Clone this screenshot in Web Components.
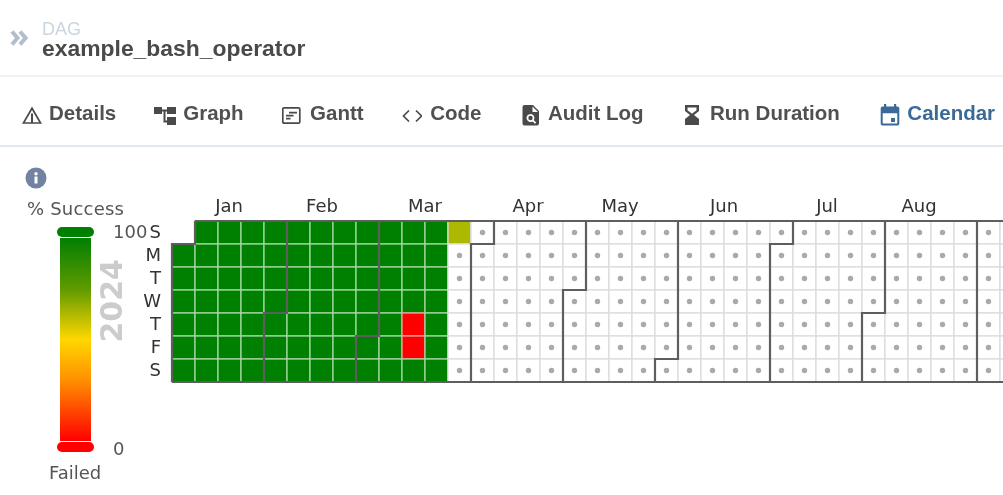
<!DOCTYPE html>
<html lang="en">
<head>
<meta charset="utf-8">
<title>example_bash_operator</title>
<style>
html,body{margin:0;padding:0;background:#fff;overflow:hidden;width:1003px;height:495px}
body{font-family:"Liberation Sans",Arial,sans-serif;color:#4a4a4a;filter:blur(.45px)}
</style>
</head>
<body>
<dag-header label="DAG" name="example_bash_operator"></dag-header>
<dag-tabs>
  <dag-tab icon="warn" gap="7" after="-4.5">Details</dag-tab>
  <dag-tab icon="graph" gap="7.5" after="-5">Graph</dag-tab>
  <dag-tab icon="gantt" gap="9.5" after="-4">Gantt</dag-tab>
  <dag-tab icon="code" gap="8.5" after="-1">Code</dag-tab>
  <dag-tab icon="audit" gap="7.5" after="-2">Audit Log</dag-tab>
  <dag-tab icon="hour" gap="10.5" after="-2">Run Duration</dag-tab>
  <dag-tab icon="cal" gap="7.5" after="-2" active>Calendar</dag-tab>
</dag-tabs>
<cal-view>
  <cal-legend slot="legend"></cal-legend>
  <cal-heatmap slot="map"></cal-heatmap>
</cal-view>
<script>
const ICONS={
warn:'<svg width="20" height="20" viewBox="0 0 20 20"><path d="M10 3.200 18.600 18H1.400Z" fill="none" stroke="#4a4a4a" stroke-width="1.700"/><path d="M10 8.500V18" stroke="#4a4a4a" stroke-width="2"/></svg>',
graph:'<svg width="22" height="20" viewBox="0 0 22 20"><g fill="#4a4a4a"><rect x="0" y="2" width="8" height="7"/><rect x="13" y="2" width="9" height="7"/><rect x="13" y="12" width="9" height="8"/><path d="M8 4.500h5V6.500h-1.500v9H13v2H9.500v-11H8Z"/></g></svg>',
gantt:'<svg width="20" height="20" viewBox="0 0 20 20"><g fill="none" stroke="#4a4a4a" stroke-width="1.700"><rect x="1.800" y="2.800" width="17" height="15.400" rx="1.200"/><path d="M8 7.700h8M5 10.700h7.500M5 13.700h4.500"/></g></svg>',
code:'<svg width="20" height="20" viewBox="0 0 20 20"><path d="M7 5.500 1.500 11 7 16.500M14 5.500 19.500 11 14 16.500" fill="none" stroke="#4a4a4a" stroke-width="1.700"/></svg>',
audit:'<svg width="18" height="22" viewBox="0 0 18 22"><path fill-rule="evenodd" fill="#4a4a4a" d="M2.500 1H11l6 6v12.500a2 2 0 0 1-2 2H2.500a2 2 0 0 1-2-2V3a2 2 0 0 1 2-2ZM10.500 2.500V8H16ZM8.500 10a4 4 0 1 0 2.100 7.400l2.400 2.400 1.200-1.200-2.400-2.400A4 4 0 0 0 8.500 10Zm0 1.800a2.200 2.200 0 1 1 0 4.400 2.200 2.200 0 0 1 0-4.400Z"/></svg>',
hour:'<svg width="16" height="22" viewBox="0 0 16 22"><path fill-rule="evenodd" fill="#4a4a4a" d="M1 1h14v6l-5 4 5 4v6H1v-6l5-4-5-4ZM3.500 3.500v2.700L8 9.800l4.500-3.600V3.500Z"/></svg>',
cal:'<svg width="20" height="22" viewBox="0 0 20 22"><g fill="#3a6a98"><rect x="4" y="0" width="2.200" height="5"/><rect x="14" y="0" width="2.200" height="5"/><path fill-rule="evenodd" d="M2.500 2.500h15a1.800 1.800 0 0 1 1.800 1.800v15.500a1.800 1.800 0 0 1-1.800 1.800h-15A1.800 1.800 0 0 1 .7 19.800V4.300A1.800 1.800 0 0 1 2.500 2.500Zm.200 6.700v10.400h14.600V9.200Z"/><rect x="11" y="14" width="4" height="4"/></g></svg>'
};
class DagHeader extends HTMLElement{
  constructor(){super();
    const s=this.attachShadow({mode:'open'});
    s.innerHTML=`<style>
    :host{display:flex;box-sizing:border-box;height:77px;border-bottom:2px solid #eef2f6;padding:20px 0 0 10px;gap:14px;align-items:flex-start}
    svg{margin-top:10px;flex:none}
    .l{font-size:18px;line-height:19px;color:#cbd5e0}
    .n{font-size:22.9px;line-height:23px;font-weight:700;color:#4a4a4a;margin-top:-2px}
    </style>
    <svg width="18" height="16" viewBox="0 0 18 16"><path d="M2 1.500 7.500 8 2 14.500M10 1.500 15.500 8 10 14.500" fill="none" stroke="#b2becc" stroke-width="4"/></svg>
    <div><div class="l">${this.getAttribute('label')}</div><div class="n">${this.getAttribute('name')}</div></div>`;
  }
}
class DagTabs extends HTMLElement{
  constructor(){super();
    this.attachShadow({mode:'open'}).innerHTML=`<style>
    :host{display:flex;box-sizing:border-box;height:70px;border-bottom:2px solid #e2e8f0;padding-left:1px;overflow:hidden}
    </style><slot></slot>`;
  }
}
class DagTab extends HTMLElement{
  constructor(){super();
    const active=this.hasAttribute('active');
    this.attachShadow({mode:'open'}).innerHTML=`<style>
    :host{display:flex;flex:none;box-sizing:border-box;height:70px;margin-right:${this.getAttribute('after')}px;padding:3px 21px 0;gap:${this.getAttribute('gap')}px;align-items:center;
      font-size:20.500px;font-weight:700;color:${active?'#3a6a98':'#505050'};border-bottom:2px solid ${active?'#3a6a98':'transparent'}}
    svg{display:block;margin-top:5px}
    </style>${ICONS[this.getAttribute('icon')]}<slot></slot>`;
  }
}
class CalView extends HTMLElement{
  constructor(){super();
    this.attachShadow({mode:'open'}).innerHTML=`<style>
    :host{display:flex;align-items:flex-start}
    </style><slot name="legend"></slot><slot name="map"></slot>`;
  }
}
class CalLegend extends HTMLElement{
  constructor(){super();
    this.attachShadow({mode:'open'}).innerHTML=`<style>
    :host{display:block;flex:none;width:140px;height:347px;box-sizing:border-box;padding:20px 0 0 25px;font-family:"DejaVu Sans",sans-serif;font-size:18px;color:#555}
    svg{display:block}
    .t{margin-top:10px;line-height:20px;white-space:nowrap;margin-left:2px;letter-spacing:.2px}
    .row{display:flex;margin-top:8px;margin-left:32px;height:225px;position:relative}
    .bar{width:37px;display:flex;flex-direction:column;align-items:center;gap:1px}
    .pill{height:10px;width:37px;border-radius:5px;flex:none}
    .grad{flex:1;width:31px;background:linear-gradient(#008000 0%,#5f9a00 25%,#ffd700 50%,#ff9000 70%,#ff0000 100%)}
    .ticks{display:flex;flex-direction:column;justify-content:space-between;margin-left:19px;line-height:20px;height:237px;margin-top:-5px;flex:none;width:36px}
    .y{position:absolute;left:41px;top:32px;writing-mode:vertical-rl;transform:rotate(180deg);font:700 30px/28px "DejaVu Sans",sans-serif;color:#ccc}
    .f{margin:11px 0 0 24px;line-height:20px}
    </style>
    <svg width="22" height="22" viewBox="0 0 22 22"><circle cx="11" cy="11" r="10.500" fill="#7183a0"/><rect x="9.500" y="9.500" width="3" height="7" fill="#fff"/><circle cx="11" cy="6.800" r="1.700" fill="#fff"/></svg>
    <div class="t">% Success</div>
    <div class="row">
      <div class="bar"><div class="pill" style="background:#008000"></div><div class="grad"></div><div class="pill" style="background:#f00"></div></div>
      <div class="ticks"><span>100</span><span>0</span></div>
      <div class="y">2024</div>
    </div>
    <div class="f">Failed</div>`;
  }
}
class CalHeatmap extends HTMLElement{
  constructor(){super();
    const C=23,X=32,Y=74,NC=37; // grid origin inside the svg (x=172,y=221 on page)
    const xc=c=>X+c*C, yr=r=>Y+r*C;
    const pos=[[0,1],[31,32],[60,61],[91,92],[121,122],[152,153],[182,183],[213,214],[244,245],[274,275]];
    let cells='';
    for(let c=0;c<NC;c++)for(let r=0;r<7;r++){
      const p=c*7+r; if(p===0)continue;
      let f='#fff',dot=true,st='#dcdcdc';
      if(p<84){f='#008000';dot=false;st='#a4d6a4';}
      if(p===84){f='#adb800';dot=false;st='#dcdcdc';}
      if(p===74||p===75){f='#ff0000';st='#f0a0a0';}
      cells+=`<rect x="${xc(c)}" y="${yr(r)}" width="${C}" height="${C}" fill="${f}" stroke="${st}" stroke-width="1.300"/>`;
      if(dot&&f==='#fff')cells+=`<circle cx="${xc(c)+11.5}" cy="${yr(r)+11.5}" r="2.700" fill="#aaa"/>`;
    }
    let lines=`<path d="M${xc(1)} ${yr(0)}H${xc(NC)}M${xc(0)} ${yr(7)}H${xc(NC)}M${xc(0)} ${yr(7)}V${yr(1)}H${xc(1)}V${yr(0)}"/>`;
    pos.slice(1).forEach(([d,p])=>{
      const c=Math.floor(p/7),r=p%7;
      lines+= r===0?`<path d="M${xc(c)} ${yr(0)}V${yr(7)}"/>`
        :`<path d="M${xc(c+1)} ${yr(0)}V${yr(r)}H${xc(c)}V${yr(7)}"/>`;
    });
    const months=[['Jan',229],['Feb',322],['Mar',425],['Apr',528],['May',620],['Jun',724],['Jul',827],['Aug',919]];
    const mt=months.map(([m,x])=>`<text x="${x-140}" y="65" text-anchor="middle" fill="#333" font-size="18">${m}</text>`).join('');
    const dt=['S','M','T','W','T','F','S'].map((d,i)=>`<text x="21" y="${Y+17+i*23}" text-anchor="end" fill="#333" font-size="18">${d}</text>`).join('');
    this.attachShadow({mode:'open'}).innerHTML=`<style>
    :host{display:block;flex:none;width:863px;height:347px}
    svg{display:block;font-family:"DejaVu Sans",sans-serif}
    </style>
    <svg width="863" height="347" viewBox="0 0 863 347">${mt}${dt}${cells}<g fill="none" stroke="#5e5e5e" stroke-width="2.200">${lines}</g></svg>`;
  }
}
customElements.define('dag-header',DagHeader);
customElements.define('dag-tabs',DagTabs);
customElements.define('dag-tab',DagTab);
customElements.define('cal-view',CalView);
customElements.define('cal-legend',CalLegend);
customElements.define('cal-heatmap',CalHeatmap);
</script>
</body>
</html>
